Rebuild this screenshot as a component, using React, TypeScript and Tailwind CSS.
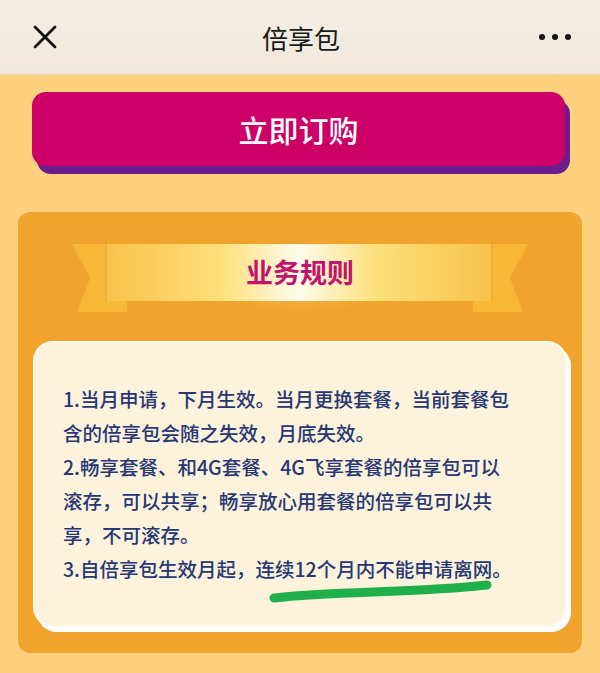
import React from "react";

const rules = [
  "1.当月申请，下月生效。当月更换套餐，当前套餐包",
  "含的倍享包会随之失效，月底失效。",
  "2.畅享套餐、和4G套餐、4G飞享套餐的倍享包可以",
  "滚存，可以共享；畅享放心用套餐的倍享包可以共",
  "享，不可滚存。",
];

function Ribbon() {
  return (
    <div className="relative h-[68px]">
      <svg className="absolute inset-0" width="564" height="68" viewBox="0 0 564 68">
        <defs>
          <linearGradient id="band" x1="0" x2="1" y1="0" y2="0">
            <stop offset="0" stopColor="#f8c24a" />
            <stop offset="0.3" stopColor="#fde07a" />
            <stop offset="0.5" stopColor="#fffbea" />
            <stop offset="0.7" stopColor="#fde07a" />
            <stop offset="1" stopColor="#f8c24a" />
          </linearGradient>
          <radialGradient id="glow">
            <stop offset="0" stopColor="#fff3c8" stopOpacity="0.9" />
            <stop offset="1" stopColor="#f3aa30" stopOpacity="0" />
          </radialGradient>
        </defs>
        <ellipse cx="282" cy="28" rx="110" ry="44" fill="url(#glow)" />
        {/* tails */}
        <polygon points="54,0 109,0 109,68 59,68 72,34" fill="#f7b838" />
        <polygon points="510,0 455,0 455,68 505,68 492,34" fill="#f7b838" />
        <rect x="87" y="0" width="388" height="57" fill="url(#band)" />
        <line x1="88" y1="0" x2="88" y2="57" stroke="#eeae3c" strokeWidth="2" />
        <line x1="474" y1="0" x2="474" y2="57" stroke="#eeae3c" strokeWidth="2" />
      </svg>
      <div className="relative flex h-[57px] items-center justify-center">
        <span className="text-[27px] font-bold text-[#c2146e]">业务规则</span>
      </div>
    </div>
  );
}

export default function App() {
  return (
    <div
      className="flex h-[673px] w-[600px] flex-col bg-[#fdd07e]"
      style={{ fontFamily: '"Noto Sans CJK SC", "Noto Sans", sans-serif' }}
    >
      {/* top bar */}
      <div className="flex h-[75px] shrink-0 items-center justify-between border-b border-[#e8d9bd] bg-gradient-to-b from-[#f3eee5] to-[#f0e8da] pl-[33px] pr-[29px]">
        <svg width="24" height="24" viewBox="0 0 24 24" fill="none" stroke="#111" strokeWidth="2.8" strokeLinecap="round">
          <path d="M2 2 L22 22 M22 2 L2 22" />
        </svg>
        <div className="ml-[6px] text-[26px] text-[#1a1a1a]">倍享包</div>
        <div className="flex w-[32px] items-center justify-between">
          <span className="h-[6px] w-[6px] rounded-full bg-[#111]" />
          <span className="h-[6px] w-[6px] rounded-full bg-[#111]" />
          <span className="h-[6px] w-[6px] rounded-full bg-[#111]" />
        </div>
      </div>

      {/* buy button */}
      <div className="px-[32px] pt-[17px]">
        <button className="flex h-[74px] w-[533px] items-center justify-center rounded-[14px] bg-[#cc0066] text-[30px] font-medium text-white shadow-[5px_8px_0_#6a1d8c]">
          立即订购
        </button>
      </div>

      {/* rules panel */}
      <div className="mx-[18px] mt-[46px] rounded-[12px] bg-[#f0a42e] px-[15px] pb-[26px] pt-[32px]">
        <div className="-mx-[15px]">
          <Ribbon />
        </div>
        <div className="relative mt-[29px] h-[286px] rounded-[20px] border-2 border-[#fffaf0] bg-[#fdf3dc] pl-[28px] pt-[39px] shadow-[4px_5px_0_#ffffff] text-[19.5px] font-medium leading-[34px] text-[#263775]">
          {rules.map((line) => (
            <div key={line} className="whitespace-nowrap">{line}</div>
          ))}
          <div className="whitespace-nowrap">3.自倍享包生效月起，连续12个月内不能申请离网。</div>
          <svg className="absolute left-0 top-0" width="534" height="286" viewBox="0 0 534 286" fill="none">
            <path d="M239 255 C 300 248, 380 250, 452 242" stroke="#1fb04c" strokeWidth="9" strokeLinecap="round" />
          </svg>
        </div>
      </div>
    </div>
  );
}
